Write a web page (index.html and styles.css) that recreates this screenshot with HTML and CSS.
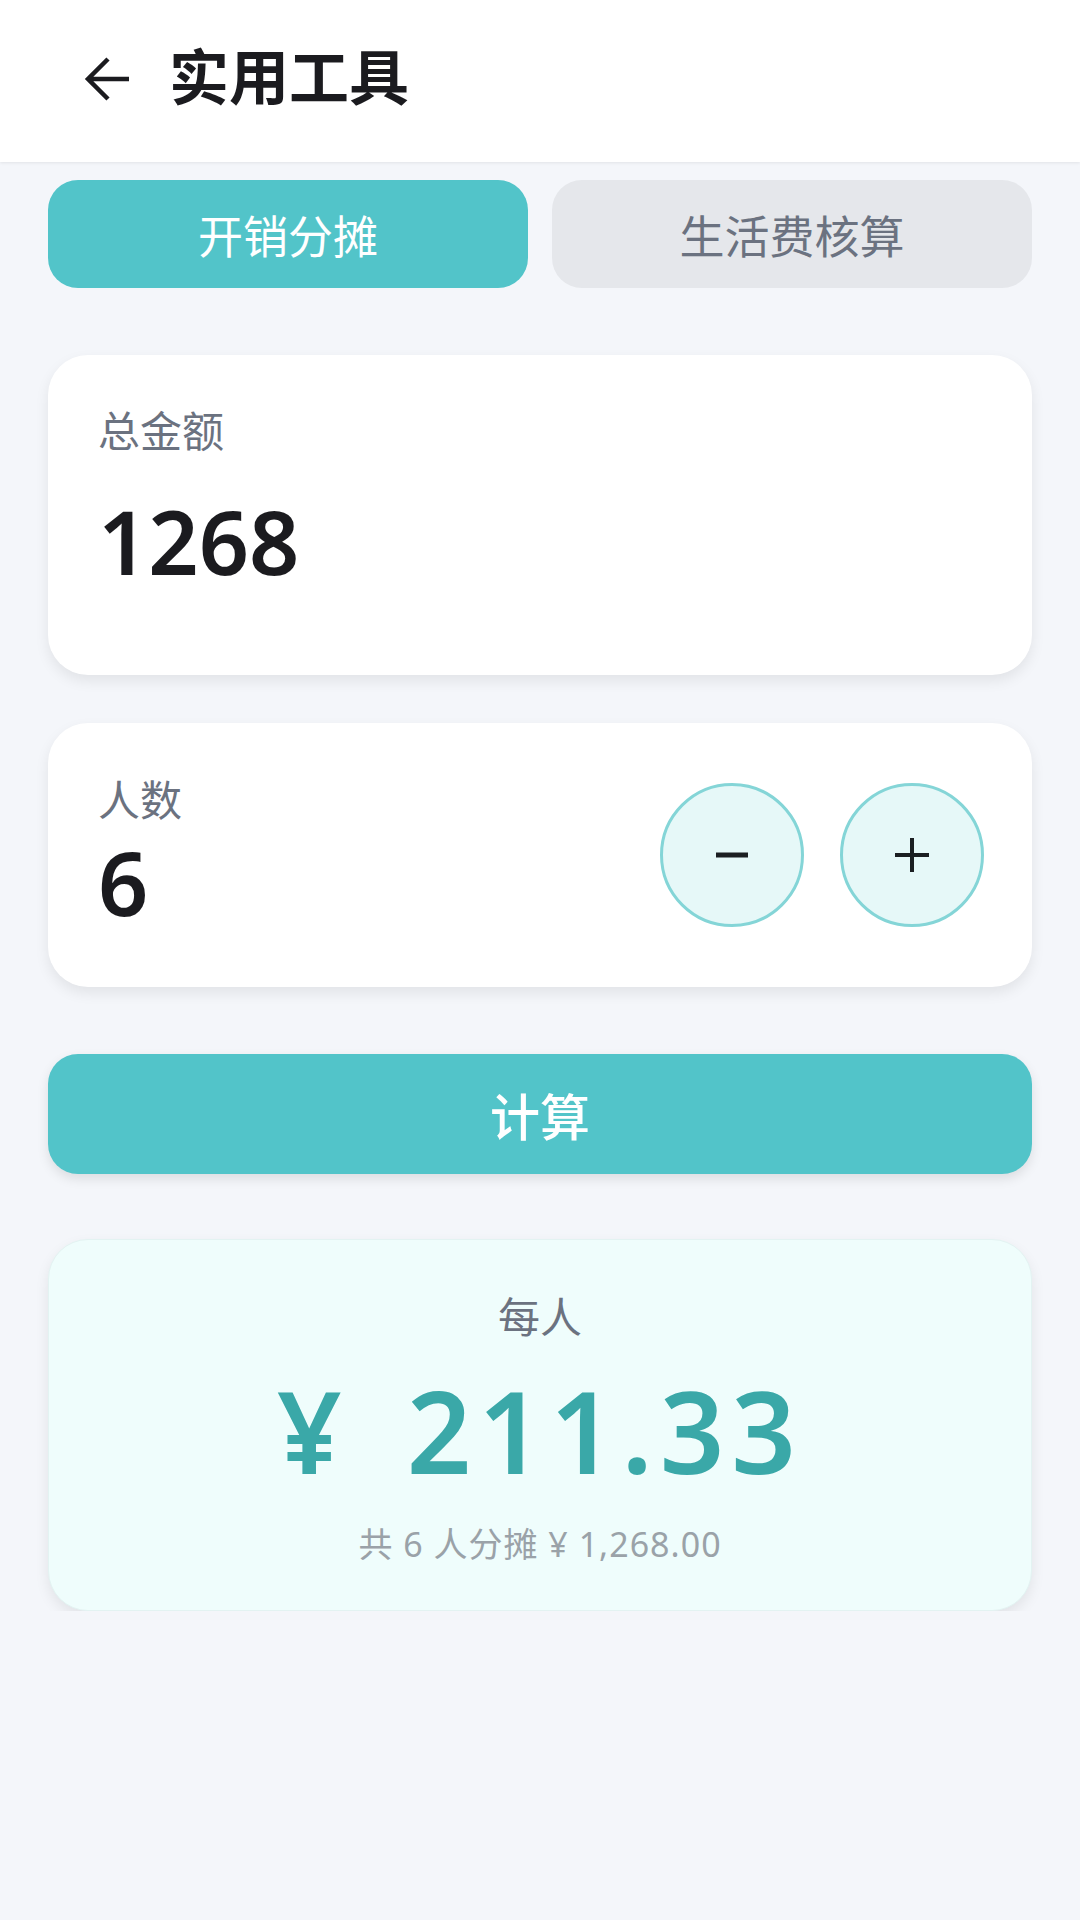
FILE: index.html
```html
<!DOCTYPE html>
<html lang="zh-CN">
<head>
  <meta charset="UTF-8" />
  <meta name="viewport" content="width=device-width, initial-scale=1.0" />
  <title>实用工具</title>
  <link rel="stylesheet" href="styles.css">
</head>
<body>
  <header class="top-bar">
    <svg class="back-icon" viewBox="0 0 48 48" width="48" height="48">
      <path d="M45 24H6M24 4L4 24l20 20" fill="none" stroke="#1b1b1f" stroke-width="4.5" />
    </svg>
    <h1>实用工具</h1>
  </header>

  <main class="app-container">
    <div class="tabs">
      <button class="tab active">开销分摊</button>
      <button class="tab">生活费核算</button>
    </div>

    <section class="card amount-card">
      <div class="label">总金额</div>
      <div class="value">1268</div>
    </section>

    <section class="card people-card">
      <div class="people-info">
        <div class="label">人数</div>
        <div class="value">6</div>
      </div>
      <div class="stepper">
        <button class="step" aria-label="减少">
          <svg viewBox="0 0 36 36" width="36" height="36"><path d="M2 18h32" stroke="#1b1f22" stroke-width="5" /></svg>
        </button>
        <button class="step" aria-label="增加">
          <svg viewBox="0 0 36 36" width="36" height="36"><path d="M1 18h34M18 1v34" stroke="#1b1f22" stroke-width="4" /></svg>
        </button>
      </div>
    </section>

    <button class="calc-btn">计算</button>

    <section class="card result-card">
      <div class="label">每人</div>
      <div class="result-value"><span class="currency">¥</span>211.33</div>
      <div class="result-note">共 6 人分摊 ¥ 1,268.00</div>
    </section>
  </main>
</body>
</html>
```

FILE: styles.css
```css
html, body {
  margin: 0;
  padding: 0;
  font-family: "Noto Sans", "Noto Sans CJK SC", sans-serif;
  background-color: #f4f6fa;
  color: #1b1b1f;
  -webkit-font-smoothing: antialiased;
}

.top-bar {
  height: 162px;
  background-color: #fff;
  display: flex;
  align-items: center;
  padding-left: 84px;
  box-sizing: border-box;
  box-shadow: 0 1px 3px rgba(0,0,0,0.08);
}

.back-icon {
  display: block;
  margin-top: -4px;
}

.top-bar h1 {
  margin: -8px 0 0 37px;
  font-size: 60px;
  font-weight: 700;
  line-height: 1.2;
}

.app-container {
  padding: 18px 48px 0;
}

.tabs {
  display: grid;
  grid-template-columns: 1fr 1fr;
  gap: 24px;
}

button {
  font-family: inherit;
  border: none;
  cursor: pointer;
}

.tab {
  height: 108px;
  border-radius: 30px;
  font-size: 45px;
  background-color: #e5e7eb;
  color: #6b7280;
}

.tab.active {
  background-color: #52c4c9;
  color: #fff;
}

.card {
  background-color: #fff;
  border-radius: 40px;
  box-shadow: 0 6px 14px rgba(0,0,0,0.08);
  box-sizing: border-box;
}

.label {
  font-size: 42px;
  line-height: 48px;
  color: #6b7280;
}

.value {
  font-size: 88px;
  line-height: 106px;
  font-weight: 600;
  color: #1b1b1f;
}

.amount-card {
  margin-top: 67px;
  height: 320px;
  padding: 52px 50px 0;
}

.amount-card .value {
  margin-top: 33px;
}

.people-card {
  margin-top: 48px;
  height: 264px;
  padding: 0 48px 0 50px;
  display: flex;
  align-items: center;
  justify-content: space-between;
}

.people-info .value {
  margin-top: 5px;
}

.stepper {
  display: flex;
  gap: 36px;
}

.step {
  width: 144px;
  height: 144px;
  border-radius: 50%;
  border: 3px solid #84d5d7;
  background-color: #e6f8f8;
  padding: 0;
  display: flex;
  align-items: center;
  justify-content: center;
}

.step svg {
  display: block;
}

.calc-btn {
  display: block;
  width: 100%;
  margin-top: 67px;
  height: 120px;
  border-radius: 30px;
  background-color: #52c4c9;
  color: #fff;
  font-size: 50px;
  font-weight: 500;
  box-shadow: 0 5px 12px rgba(0,0,0,0.1);
}

.result-card {
  margin-top: 65px;
  height: 372px;
  padding-top: 53px;
  text-align: center;
  background-color: #effdfc;
  border: 1px solid #e3f3f2;
}

.result-value {
  margin-top: 21px;
  font-size: 113px;
  line-height: 136px;
  font-weight: 600;
  letter-spacing: 7px;
  color: #3aa8a8;
}

.currency {
  margin-right: 58px;
}

.result-note {
  margin-top: 26px;
  font-size: 34px;
  line-height: 40px;
  letter-spacing: 1px;
  color: #9aa2a8;
}
```
